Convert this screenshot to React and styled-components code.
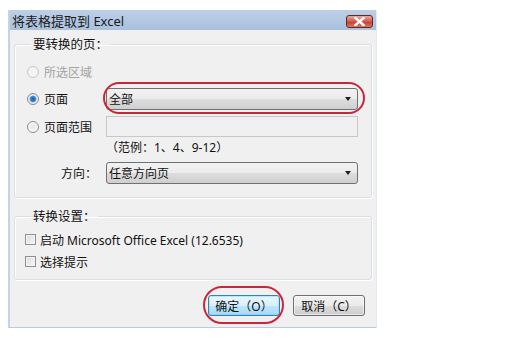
import styled, { createGlobalStyle } from 'styled-components'

const GlobalStyle = createGlobalStyle`
	body {
		margin: 0;
		background: #ffffff;
		font-family: "Noto Sans", "Noto Sans CJK SC", sans-serif;
		font-size: 12px;
		color: #111111;
	}
`

const App = () => {
	return (
		<Page>
			<GlobalStyle />
			<Window>
				<TitleBar>
					<Title>将表格提取到 Excel</Title>
					<CloseButton>
						<svg width="11" height="9" viewBox="0 0 11 9">
							<path
								d="M1.5 1 L9.5 8 M9.5 1 L1.5 8"
								stroke="#ffffff"
								strokeWidth="2.4"
								strokeLinecap="square"
							/>
						</svg>
					</CloseButton>
				</TitleBar>
				<Body>
					<Group>
						<Legend>要转换的页：</Legend>
						<Row $h={20} $mt={9}>
							<RadioLabel $disabled>
								<Radio $disabled />
								所选区域
							</RadioLabel>
						</Row>
						<Row $h={22} $mt={6}>
							<RadioLabel>
								<Radio $checked />
								页面
							</RadioLabel>
							<Marked>
								<Combo>
									全部
									<Arrow />
								</Combo>
							</Marked>
						</Row>
						<Row $h={21} $mt={6}>
							<RadioLabel>
								<Radio />
								页面范围
							</RadioLabel>
							<TextField />
						</Row>
						<Row $h={16} $mt={1}>
							<span />
							<Hint>（范例：1、4、9-12）</Hint>
						</Row>
						<Row $h={22} $mt={8}>
							<FieldName>方向：</FieldName>
							<Combo>
								任意方向页
								<Arrow />
							</Combo>
						</Row>
					</Group>
					<Group $second>
						<Legend>转换设置：</Legend>
						<CheckRow $mt={6}>
							<Checkbox />
							启动 Microsoft Office Excel (12.6535)
						</CheckRow>
						<CheckRow $mt={5}>
							<Checkbox />
							选择提示
						</CheckRow>
					</Group>
					<Buttons>
						<Marked $button>
							<Button $default>确定（O）</Button>
						</Marked>
						<Button>取消（C）</Button>
					</Buttons>
				</Body>
			</Window>
		</Page>
	)
}

export default App

const Page = styled.div`
	padding: 10px 0 0 8px;
`

const Window = styled.div`
	width: 369px;
	height: 318px;
	box-sizing: border-box;
	background: #f0f0f0;
	border-left: 2px solid #c3d4e8;
	border-bottom: 1px solid #b9cce3;
	border-right: 1px solid #e4ebf4;
	display: flex;
	flex-direction: column;
`

const TitleBar = styled.div`
	height: 20px;
	display: flex;
	align-items: center;
	justify-content: space-between;
	padding: 0 3px 0 2px;
	background: linear-gradient(#bccfe6, #a9c1de);
`

const Title = styled.div`
	font-size: 13px;
	color: #1a1a1a;
	padding-top: 1px;
`

const CloseButton = styled.div`
	width: 27px;
	height: 13px;
	margin-top: 3px;
	box-sizing: border-box;
	border: 1px solid #5c2a26;
	border-radius: 3px;
	background: linear-gradient(#e9a99f, #d2594c 50%, #c23b2c 51%, #d97a62);
	display: flex;
	align-items: center;
	justify-content: center;
`

const Body = styled.div`
	flex: 1;
	padding: 6px 4px 0 4px;
	display: flex;
	flex-direction: column;
`

const Group = styled.fieldset`
	margin: ${p => (p.$second ? '10px' : '0')} 0 0 0;
	padding: 0 13px ${p => (p.$second ? '9px' : '13px')} 12px;
	border: 1px solid #d5dfe5;
	border-radius: 3px;
	box-shadow: inset 1px 1px 0 #ffffff, 1px 1px 0 #ffffff;
	min-width: 0;
`

const Legend = styled.legend`
	padding: 0 2px;
	margin-left: 4px;
	line-height: 17px;
	font-size: 12.5px;
`

const Row = styled.div`
	display: grid;
	grid-template-columns: 79px 1fr;
	align-items: center;
	height: ${p => p.$h}px;
	margin-top: ${p => p.$mt}px;
`

const RadioLabel = styled.div`
	display: flex;
	align-items: center;
	gap: 5px;
	color: ${p => (p.$disabled ? '#a3a3a3' : '#111111')};
	white-space: nowrap;
`

const Radio = styled.span`
	width: 12px;
	height: 12px;
	box-sizing: border-box;
	border-radius: 50%;
	border: 1px solid ${p => (p.$disabled ? '#c6c6c6' : '#8a8a8a')};
	background: ${p =>
		p.$checked
			? 'radial-gradient(circle, #1d5a9c 0, #3f8bd8 2.8px, #dfe9f3 3.8px, #f4f4f4 6px)'
			: p.$disabled
			? '#f4f4f4'
			: 'radial-gradient(circle, #e4e4e4 0, #ffffff 6px)'};
	flex: none;
`

const FieldName = styled.div`
	justify-self: end;
	margin-right: 9px;
`

const Marked = styled.div`
	position: relative;
	height: 100%;
	display: flex;
	&::after {
		content: '';
		position: absolute;
		inset: ${p => (p.$button ? '-9px -4px -8px -5px' : '-6px -7px -4px -3px')};
		border: 2.5px solid #c6283b;
		border-radius: ${p => (p.$button ? '19px' : '16px')};
		pointer-events: none;
	}
`

const Combo = styled.div`
	flex: 1;
	height: 100%;
	box-sizing: border-box;
	border: 1px solid #707070;
	border-radius: 3px;
	background: linear-gradient(#f2f2f2, #ebebeb 50%, #dddddd 51%, #cfcfcf);
	display: flex;
	align-items: center;
	justify-content: space-between;
	padding: 0 6px 0 2px;
`

const Arrow = styled.span`
	width: 0;
	height: 0;
	border-left: 3.5px solid transparent;
	border-right: 3.5px solid transparent;
	border-top: 4px solid #1e1e1e;
`

const TextField = styled.div`
	height: 100%;
	box-sizing: border-box;
	border: 1px solid #c8c8c8;
	background: #f0f0f0;
`

const Hint = styled.div`
	font-size: 12px;
`

const CheckRow = styled.div`
	display: flex;
	align-items: center;
	gap: 4px;
	margin-top: ${p => p.$mt}px;
	margin-left: -2px;
	height: 17px;
`

const Checkbox = styled.span`
	width: 11px;
	height: 11px;
	box-sizing: border-box;
	border: 1px solid #8f8f8f;
	background: linear-gradient(135deg, #dcdcdc, #f8f8f8);
	box-shadow: inset 0 0 0 1px #f4f4f4;
	flex: none;
`

const Buttons = styled.div`
	display: flex;
	justify-content: flex-end;
	gap: 13px;
	padding: 15px 7px 0 0;
`

const Button = styled.div`
	width: 72px;
	height: 21px;
	box-sizing: border-box;
	border: 1px solid ${p => (p.$default ? '#3c7fb1' : '#707070')};
	border-radius: 3px;
	background: ${p =>
		p.$default
			? 'linear-gradient(#eaf6fd, #d9f0fc 50%, #bee6fd 51%, #a7d9f5)'
			: 'linear-gradient(#f2f2f2, #ebebeb 50%, #dddddd 51%, #cfcfcf)'};
	box-shadow: inset 0 0 0 1px ${p => (p.$default ? '#48d1ff55' : '#ffffff88')};
	display: flex;
	align-items: center;
	justify-content: center;
	font-size: 12px;
`
